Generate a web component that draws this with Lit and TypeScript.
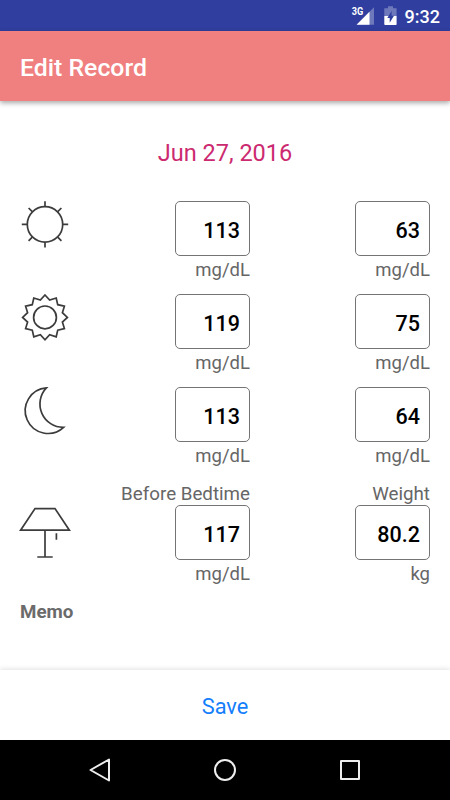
import { LitElement, html, css, svg } from "lit";
import { customElement, property } from "lit/decorators.js";

const polar = (r: number, deg: number, cx: number, cy: number) => {
  const a = (deg * Math.PI) / 180;
  return `${(cx + r * Math.sin(a)).toFixed(2)} ${(cy - r * Math.cos(a)).toFixed(2)}`;
};

const CX = 25;
const CY = 23.4;
const rays = Array.from({ length: 8 }, (_, i) => `M${polar(18, i * 45, CX, CY)}L${polar(23.2, i * 45, CX, CY)}`).join("");
const star = "M" + Array.from({ length: 24 }, (_, i) => polar(i % 2 ? 18 : 22.4, i * 15, CX, CY)).join("L") + "Z";

const icons = {
  morning: svg`<circle cx="25" cy="23.4" r="17.7"/><path d=${rays}/>`,
  noon: svg`<circle cx="25" cy="23.4" r="11.4"/><path d=${star}/>`,
  night: svg`<path d="M26.4 .9A22.8 22.8 0 1 0 43.6 40.3A23.3 23.3 0 0 1 26.4 .9Z"/>`,
  lamp: svg`<path d="M15 3.6H35L49.4 25.2H.6ZM25 25.2V52M17.3 52H32.7M36.4 28.3V34.8"/>`,
};

type IconName = keyof typeof icons;
interface Field { caption?: string; value: string; unit: string }
interface Row { icon: IconName; fields: Field[] }

@customElement("value-field")
export class ValueField extends LitElement {
  @property() caption = "";
  @property() value = "";
  @property() unit = "";
  static styles = css`
    :host { display: flex; flex-direction: column; align-items: flex-end; white-space: nowrap; }
    .label { font-size: 18.75px; line-height: 22px; height: 22px; color: #666; }
    .unit { padding-top: 3px; height: 19px; font-size: 18.5px; }
    .box {
      box-sizing: border-box; width: 75px; height: 55px; border: 1px solid #747474; border-radius: 5px;
      padding: 3px 9px 0 0; display: flex; align-items: center; justify-content: flex-end;
      font-size: 21.5px; font-weight: 500; color: #000;
    }
  `;
  render() {
    return html`
      ${this.caption ? html`<div class="label">${this.caption}</div>` : ""}
      <div class="box">${this.value}</div>
      <div class="label unit">${this.unit}</div>
    `;
  }
}

@customElement("app-root")
export class AppRoot extends LitElement {
  static styles = css`
    :host {
      display: flex; flex-direction: column; height: 800px; width: 450px; overflow: hidden;
      background: #fff; font-family: Roboto, sans-serif;
    }
    .status {
      height: 31px; background: #303f9f; display: flex; align-items: center; justify-content: flex-end;
      box-sizing: border-box; padding-right: 10px; color: #fff; flex: none;
    }
    .status svg { display: block; width: 50px; height: 31px; flex: none; }
    .net { font-size: 10px; font-weight: 700; fill: #fff; }
    .clock { font-size: 18px; font-weight: 500; line-height: 31px; padding-top: 2px; width: 40px; text-align: right; }
    .bar {
      height: 70px; flex: none; background: #f08080; box-shadow: 0 2px 5px rgba(0, 0, 0, 0.35);
      display: flex; align-items: center; padding: 2px 20px 0; box-sizing: border-box;
      color: #fff; font-size: 24.8px; font-weight: 500;
    }
    .main { flex: 1; padding: 37px 20px 0; display: flex; flex-direction: column; }
    .date { text-align: center; font-size: 23.5px; line-height: 30px; color: #cc2a70; }
    .rows { display: flex; flex-direction: column; margin-top: 33px; }
    .row { display: grid; grid-template-columns: 50px 180px 180px; height: 93px; align-items: start; }
    .row.captioned { height: 115px; margin-top: 3px; }
    .row.captioned .icon { margin-top: 22px; }
    .icon { width: 50px; height: 54px; fill: none; stroke: #3c3c3c; stroke-width: 1.7; display: block; overflow: visible; }
    .memo { font-size: 18.75px; font-weight: 700; color: #6b6b6b; line-height: 24px; margin-top: 2px; }
    .footer {
      height: 70px; flex: none; display: flex; align-items: center; justify-content: center; background: #fff;
      box-shadow: 0 -1px 5px rgba(0, 0, 0, 0.12); font-size: 21.8px; color: #147efb; padding-top: 2px; box-sizing: border-box;
    }
    .nav { height: 60px; flex: none; background: #000; display: flex; justify-content: center; }
    .nav svg { width: 310px; height: 60px; fill: none; stroke: #eee; stroke-width: 2; stroke-linejoin: round; }
  `;

  private rows: Row[] = [
    { icon: "morning", fields: [{ value: "113", unit: "mg/dL" }, { value: "63", unit: "mg/dL" }] },
    { icon: "noon", fields: [{ value: "119", unit: "mg/dL" }, { value: "75", unit: "mg/dL" }] },
    { icon: "night", fields: [{ value: "113", unit: "mg/dL" }, { value: "64", unit: "mg/dL" }] },
    {
      icon: "lamp",
      fields: [
        { caption: "Before Bedtime", value: "117", unit: "mg/dL" },
        { caption: "Weight", value: "80.2", unit: "kg" },
      ],
    },
  ];

  render() {
    return html`
      <div class="status">
        <svg viewBox="350 0 50 31">
          <text class="net" x="351.7" y="15" textLength="11.5" lengthAdjust="spacingAndGlyphs">3G</text>
          <path d="M374 7.3V24.7H356.6Z" fill="#fff" opacity=".3"/>
          <path d="M369.5 11.8V24.7H356.6Z" fill="#fff"/>
          <path d="M388 6.3H393V8.2H396.6V16H384.3V8.2H388Z" fill="#fff" opacity=".3"/>
          <path d="M384.3 16H396.6V24.2Q396.6 25 395.8 25H385.1Q384.3 25 384.3 24.2Z" fill="#fff"/>
          <path d="M391.6 11L387.3 18H389.7V22.8L394 15.7H391.6Z" fill="#303f9f"/>
        </svg>
        <div class="clock">9:32</div>
      </div>
      <div class="bar">Edit Record</div>
      <div class="main">
        <div class="date">Jun 27, 2016</div>
        <div class="rows">
          ${this.rows.map(
            (r) => html`
              <div class="row ${r.icon === "lamp" ? "captioned" : ""}">
                <svg class="icon" viewBox="0 0 50 54">${icons[r.icon]}</svg>
                ${r.fields.map(
                  (f) => html`<value-field .caption=${f.caption ?? ""} .value=${f.value} .unit=${f.unit}></value-field>`
                )}
              </div>
            `
          )}
        </div>
        <div class="memo">Memo</div>
      </div>
      <div class="footer">Save</div>
      <div class="nav">
        <svg viewBox="70 740 310 60">
          <path d="M109 759.5V780.5L90.5 770Z"/>
          <circle cx="225" cy="770" r="10"/>
          <rect x="341" y="761" width="18" height="18"/>
        </svg>
      </div>
    `;
  }
}
